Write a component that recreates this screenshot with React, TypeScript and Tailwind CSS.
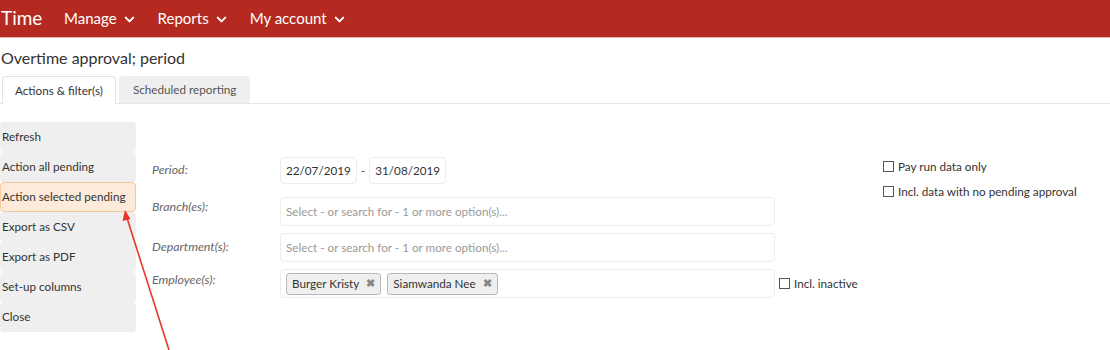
import { ChevronDown } from "lucide-react";

const menuItems = [
  "Refresh",
  "Action all pending",
  "Action selected pending",
  "Export as CSV",
  "Export as PDF",
  "Set-up columns",
  "Close",
];

const NavItem = ({ label }: { label: string }) => (
  <div className="flex items-center gap-[5px] text-[15px] text-white">
    <span>{label}</span>
    <ChevronDown size={15} strokeWidth={3.2} className="mt-[1px]" />
  </div>
);

const Checkbox = ({ label }: { label: string }) => (
  <label className="flex items-center gap-[4px] text-[11.7px] text-[#333] whitespace-nowrap">
    <span className="w-[11px] h-[11px] shrink-0 border border-[#555] bg-white" />
    <span>{label}</span>
  </label>
);

const Tag = ({ label }: { label: string }) => (
  <span className="flex items-center gap-[7px] h-[22px] px-[5px] rounded-[3px] border border-[#b8b8b8] bg-[#efefef] text-[11.7px] text-[#333] whitespace-nowrap">
    {label}
    <span className="text-[11px] text-[#888] font-bold">✖</span>
  </span>
);

const SelectBox = ({ children }: { children: React.ReactNode }) => (
  <div className="w-[495px] shrink-0 h-[29px] flex items-center gap-[6px] px-[5px] border border-[#ececec] rounded-[4px] bg-white">
    {children}
  </div>
);

export default function App() {
  return (
    <div
      className="relative w-[1110px] h-[350px] overflow-hidden bg-white text-[#333]"
      style={{ fontFamily: "Lato, 'Open Sans', sans-serif" }}
    >
      <header className="h-[38px] bg-[#b52a20] flex items-center border-b border-[#e7b7b2]">
        <span className="pl-[1px] text-[19px] text-white w-[64px]">Time</span>
        <div className="flex items-center gap-[21px]">
          <NavItem label="Manage" />
          <NavItem label="Reports" />
          <NavItem label="My account" />
        </div>
      </header>

      <h1 className="pl-[1px] pt-[10px] text-[16px] leading-[20px] text-[#333]">
        Overtime approval; period
      </h1>

      <div className="mt-[8px] flex items-end gap-[3px] pl-[2px] border-b border-[#e6e6e6] h-[28px]">
        <div className="h-[28px] px-[12px] flex items-center bg-white border border-b-0 border-[#e3e3e3] rounded-t-[4px] text-[11.7px] text-[#333] -mb-px whitespace-nowrap">
          Actions &amp; filter(s)
        </div>
        <div className="h-[27px] px-[14px] flex items-center bg-[#efefef] rounded-t-[4px] text-[11.7px] text-[#555] whitespace-nowrap">
          Scheduled reporting
        </div>
      </div>

      <div className="flex mt-[18px]">
        <div className="w-[136px] shrink-0 flex flex-col">
          {menuItems.map((item) =>
            item === "Action selected pending" ? (
              <div
                key={item}
                className="h-[30px] flex items-center pl-[1px] text-[11.7px] text-[#333] bg-[#fdead8] border border-[#f6c8a0] rounded-[4px] whitespace-nowrap"
              >
                {item}
              </div>
            ) : (
              <div
                key={item}
                className="h-[30px] flex items-center pl-[2px] text-[11.7px] text-[#333] bg-[#efefef] rounded-[4px] whitespace-nowrap"
              >
                {item}
              </div>
            ),
          )}
        </div>

        <div className="w-[747px] shrink-0 pl-[16px] pt-[35px] flex flex-col gap-[7px]">
          <div className="flex items-center h-[27px] mb-[6px]">
            <span className="w-[128px] shrink-0 text-[12.4px] italic text-[#666]">Period:</span>
            <div className="h-[27px] px-[5px] flex items-center border border-[#ececec] rounded-[4px] text-[11.7px] text-[#333]">
              22/07/2019
            </div>
            <span className="px-[4px] text-[12px] text-[#555]">-</span>
            <div className="h-[27px] px-[5px] flex items-center border border-[#ececec] rounded-[4px] text-[11.7px] text-[#333]">
              31/08/2019
            </div>
          </div>

          <div className="flex items-center">
            <span className="w-[128px] shrink-0 text-[12.4px] italic text-[#666] -mt-[8px]">Branch(es):</span>
            <SelectBox>
              <span className="text-[11.7px] text-[#9a9a9a] whitespace-nowrap">
                Select - or search for - 1 or more option(s)...
              </span>
            </SelectBox>
          </div>

          <div className="flex items-center">
            <span className="w-[128px] shrink-0 text-[12.4px] italic text-[#666]">Department(s):</span>
            <SelectBox>
              <span className="text-[11.7px] text-[#9a9a9a] whitespace-nowrap">
                Select - or search for - 1 or more option(s)...
              </span>
            </SelectBox>
          </div>

          <div className="flex items-center">
            <span className="w-[128px] shrink-0 text-[12.4px] italic text-[#666] -mt-[6px]">Employee(s):</span>
            <SelectBox>
              <Tag label="Burger Kristy" />
              <Tag label="Siamwanda Nee" />
            </SelectBox>
            <div className="ml-[4px] mt-[1px]">
              <Checkbox label="Incl. inactive" />
            </div>
          </div>
        </div>

        <div className="pt-[36px] flex flex-col gap-[7px]">
          <Checkbox label="Pay run data only" />
          <Checkbox label="Incl. data with no pending approval" />
        </div>
      </div>

      <svg
        className="absolute left-0 top-0 pointer-events-none"
        width="1110"
        height="350"
      >
        <line x1="169" y1="350" x2="127" y2="218" stroke="#e8352b" strokeWidth="1.6" />
        <polygon points="125,210 122.5,221 130.5,219" fill="#e8352b" />
      </svg>
    </div>
  );
}
